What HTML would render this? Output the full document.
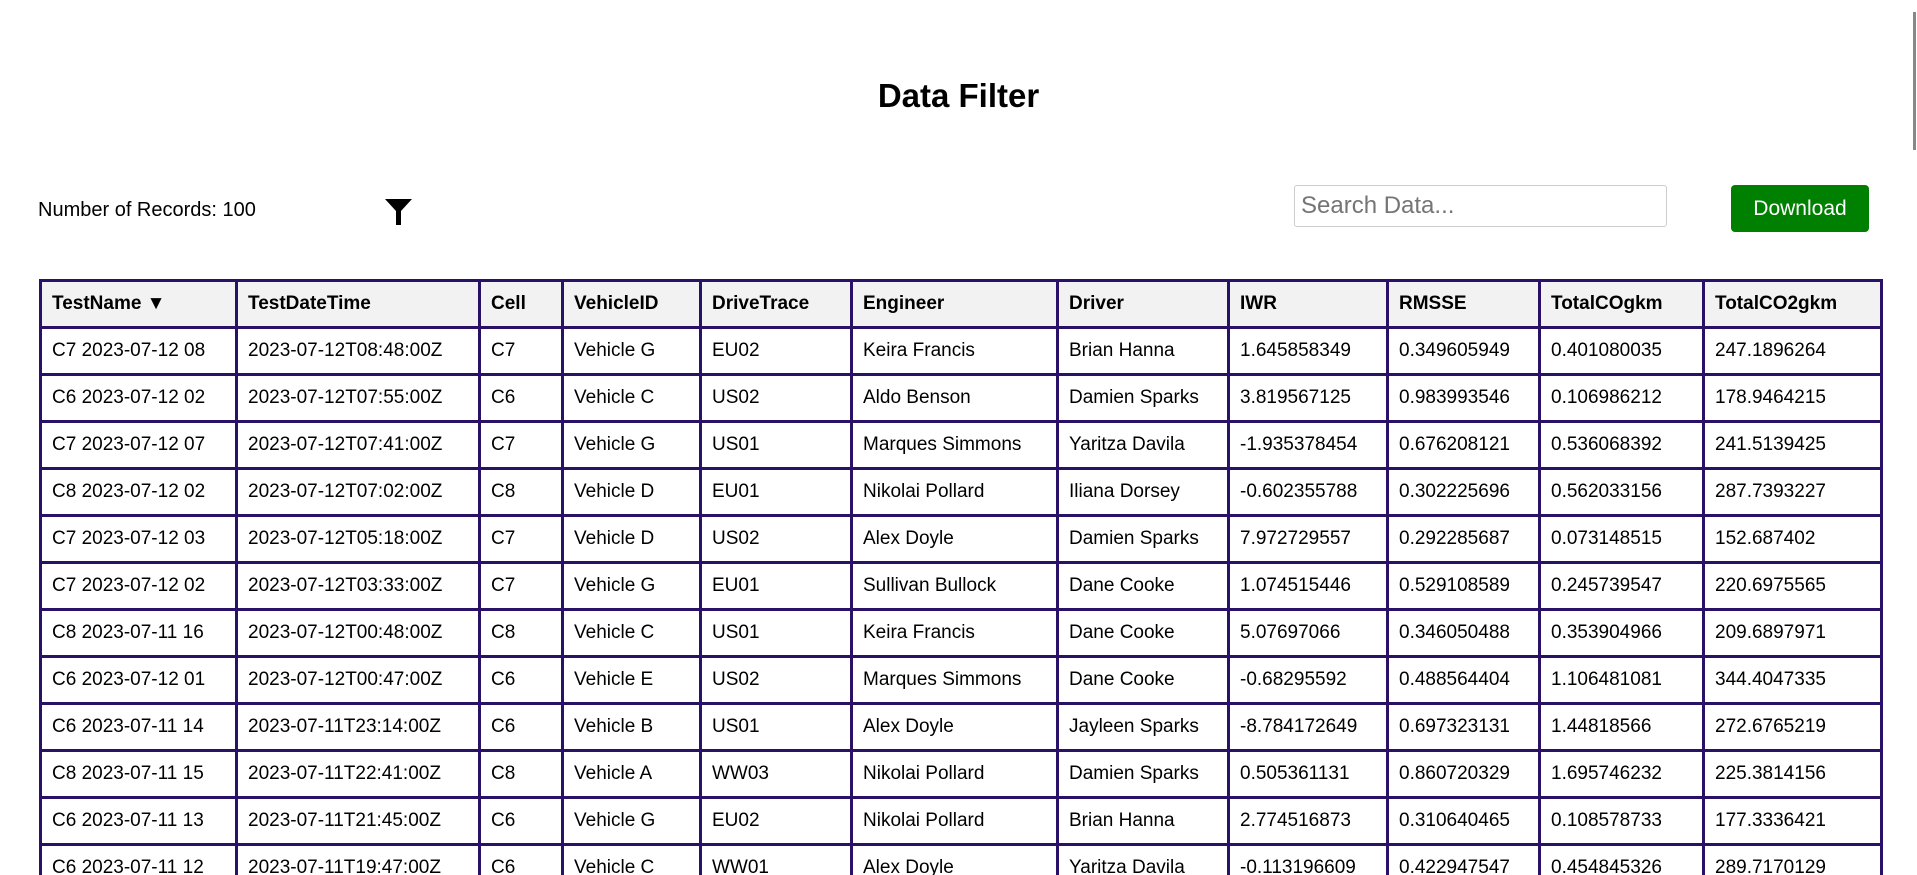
<!DOCTYPE html>
<html><head><meta charset="utf-8"><style>
html,body{margin:0;padding:0;background:#fff;width:1917px;height:875px;overflow:hidden;font-family:"Liberation Sans",Arial,sans-serif;color:#000;position:relative}
h1{position:absolute;left:0;width:1917px;top:77px;margin:0;text-align:center;font-size:33px;font-weight:bold}
.rec{position:absolute;left:38px;top:199px;font-size:20px}
.filt{position:absolute;left:385px;top:199px}
.search{position:absolute;left:1294px;top:185px;width:373px;height:42px;border:1px solid #ccc;border-radius:3px;box-sizing:border-box;font-size:24px;color:#757575;padding:8px 6px;line-height:24px}
.dl{position:absolute;left:1731px;top:185px;width:138px;height:47px;background:#008000;color:#fff;border-radius:4px;font-size:21px;text-align:center;line-height:47px}
table{position:absolute;left:39px;top:279px;border-collapse:collapse;table-layout:fixed;width:1841px;font-size:19px}
td,th{border:3px solid #2a1168;height:44px;padding:0 0 0 10px;text-align:left;white-space:nowrap;overflow:hidden}
th{background:#f2f2f2;font-weight:bold}
.sb{position:absolute;left:1913px;top:12px;width:3px;height:138px;background:#888}
</style></head><body>
<h1>Data Filter</h1>
<div class="rec">Number of Records: 100</div>
<svg class="filt" width="27" height="26" viewBox="0 0 27 26"><path d="M0 0H27L16 12V26H11V12Z" fill="#000"/></svg>
<div class="search">Search Data...</div>
<div class="dl">Download</div>
<div class="sb"></div>
<table>
<colgroup><col style="width:196px"><col style="width:243px"><col style="width:83px"><col style="width:138px"><col style="width:151px"><col style="width:206px"><col style="width:171px"><col style="width:159px"><col style="width:152px"><col style="width:164px"><col style="width:178px"></colgroup>
<tr><th>TestName ▼</th><th>TestDateTime</th><th>Cell</th><th>VehicleID</th><th>DriveTrace</th><th>Engineer</th><th>Driver</th><th>IWR</th><th>RMSSE</th><th>TotalCOgkm</th><th>TotalCO2gkm</th></tr>
<tr><td>C7 2023-07-12 08</td><td>2023-07-12T08:48:00Z</td><td>C7</td><td>Vehicle G</td><td>EU02</td><td>Keira Francis</td><td>Brian Hanna</td><td>1.645858349</td><td>0.349605949</td><td>0.401080035</td><td>247.1896264</td></tr>
<tr><td>C6 2023-07-12 02</td><td>2023-07-12T07:55:00Z</td><td>C6</td><td>Vehicle C</td><td>US02</td><td>Aldo Benson</td><td>Damien Sparks</td><td>3.819567125</td><td>0.983993546</td><td>0.106986212</td><td>178.9464215</td></tr>
<tr><td>C7 2023-07-12 07</td><td>2023-07-12T07:41:00Z</td><td>C7</td><td>Vehicle G</td><td>US01</td><td>Marques Simmons</td><td>Yaritza Davila</td><td>-1.935378454</td><td>0.676208121</td><td>0.536068392</td><td>241.5139425</td></tr>
<tr><td>C8 2023-07-12 02</td><td>2023-07-12T07:02:00Z</td><td>C8</td><td>Vehicle D</td><td>EU01</td><td>Nikolai Pollard</td><td>Iliana Dorsey</td><td>-0.602355788</td><td>0.302225696</td><td>0.562033156</td><td>287.7393227</td></tr>
<tr><td>C7 2023-07-12 03</td><td>2023-07-12T05:18:00Z</td><td>C7</td><td>Vehicle D</td><td>US02</td><td>Alex Doyle</td><td>Damien Sparks</td><td>7.972729557</td><td>0.292285687</td><td>0.073148515</td><td>152.687402</td></tr>
<tr><td>C7 2023-07-12 02</td><td>2023-07-12T03:33:00Z</td><td>C7</td><td>Vehicle G</td><td>EU01</td><td>Sullivan Bullock</td><td>Dane Cooke</td><td>1.074515446</td><td>0.529108589</td><td>0.245739547</td><td>220.6975565</td></tr>
<tr><td>C8 2023-07-11 16</td><td>2023-07-12T00:48:00Z</td><td>C8</td><td>Vehicle C</td><td>US01</td><td>Keira Francis</td><td>Dane Cooke</td><td>5.07697066</td><td>0.346050488</td><td>0.353904966</td><td>209.6897971</td></tr>
<tr><td>C6 2023-07-12 01</td><td>2023-07-12T00:47:00Z</td><td>C6</td><td>Vehicle E</td><td>US02</td><td>Marques Simmons</td><td>Dane Cooke</td><td>-0.68295592</td><td>0.488564404</td><td>1.106481081</td><td>344.4047335</td></tr>
<tr><td>C6 2023-07-11 14</td><td>2023-07-11T23:14:00Z</td><td>C6</td><td>Vehicle B</td><td>US01</td><td>Alex Doyle</td><td>Jayleen Sparks</td><td>-8.784172649</td><td>0.697323131</td><td>1.44818566</td><td>272.6765219</td></tr>
<tr><td>C8 2023-07-11 15</td><td>2023-07-11T22:41:00Z</td><td>C8</td><td>Vehicle A</td><td>WW03</td><td>Nikolai Pollard</td><td>Damien Sparks</td><td>0.505361131</td><td>0.860720329</td><td>1.695746232</td><td>225.3814156</td></tr>
<tr><td>C6 2023-07-11 13</td><td>2023-07-11T21:45:00Z</td><td>C6</td><td>Vehicle G</td><td>EU02</td><td>Nikolai Pollard</td><td>Brian Hanna</td><td>2.774516873</td><td>0.310640465</td><td>0.108578733</td><td>177.3336421</td></tr>
<tr><td>C6 2023-07-11 12</td><td>2023-07-11T19:47:00Z</td><td>C6</td><td>Vehicle C</td><td>WW01</td><td>Alex Doyle</td><td>Yaritza Davila</td><td>-0.113196609</td><td>0.422947547</td><td>0.454845326</td><td>289.7170129</td></tr>
</table>
</body></html>
